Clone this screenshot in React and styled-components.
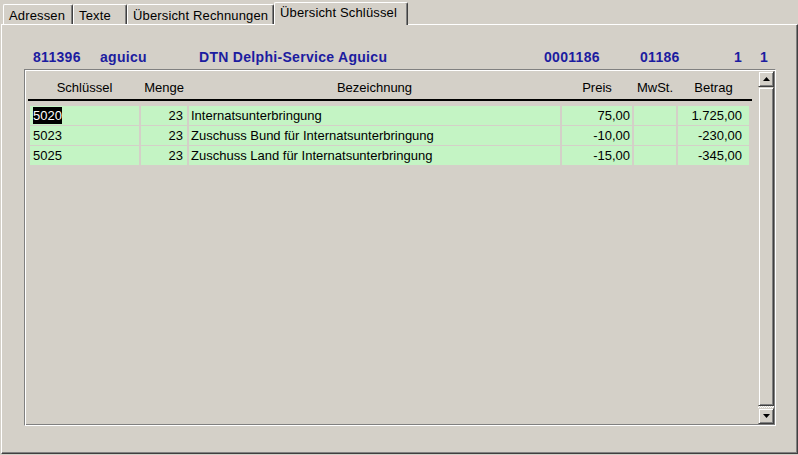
import React from 'react';
import styled, { createGlobalStyle } from 'styled-components';

const GlobalStyle = createGlobalStyle`
    html, body {
        margin: 0;
        padding: 0;
        background: #d4d0c8;
    }
    body {
        font-family: "Liberation Sans", Arial, sans-serif;
        font-size: 13px;
        color: #000;
    }
`

const COLS = '109px 46px 371px 70px 42px 71px';

const Window = styled.div`
    width: 798px;
    height: 455px;
    background: #d4d0c8;
    display: flex;
    flex-direction: column;
    overflow: hidden;
`

const TabBar = styled.div`
    display: flex;
    align-items: flex-end;
    height: 24px;
    padding-left: 3px;
    box-sizing: border-box;
`

const Tab = styled.div`
    position: relative;
    box-sizing: border-box;
    width: ${p => p.$w}px;
    height: ${p => (p.$active ? 23 : 20)}px;
    margin-bottom: ${p => (p.$active ? -1 : 0)}px;
    z-index: ${p => (p.$active ? 2 : 0)};
    padding: ${p => (p.$active ? 1 : 2)}px 0 0 5px;
    line-height: 17px;
    white-space: nowrap;
    letter-spacing: 0.15px;
    background: #d4d0c8;
    border-top: 1px solid #fff;
    border-left: 1px solid #fff;
    border-right: 1px solid #404040;
    border-radius: 2px 2px 0 0;
    box-shadow: inset -1px 0 0 #808080;
`

const Panel = styled.div`
    box-sizing: border-box;
    width: 797px;
    height: 430px;
    margin-left: 1px;
    border-top: 1px solid #fff;
    border-left: 1px solid #fff;
    border-right: 1px solid #404040;
    border-bottom: 1px solid #404040;
    box-shadow: inset -1px -1px 0 #808080;
    display: flex;
    flex-direction: column;
`

const InfoRow = styled.div`
    display: flex;
    align-items: center;
    height: 18px;
    margin-top: 23px;
    margin-bottom: 3px;
    padding-left: 31px;
    font-size: 14px;
    font-weight: bold;
    letter-spacing: 0.3px;
    color: #1c1ca0;
`

const InfoItem = styled.span`
    width: ${p => p.$w}px;
    flex: none;
    white-space: nowrap;
`

const Frame = styled.div`
    box-sizing: border-box;
    width: 752px;
    height: 357px;
    margin-left: 22px;
    border: 1px solid;
    border-color: #808080 #fff #fff #808080;
    box-shadow: inset 1px 1px 0 #fff, inset -1px -1px 0 #808080;
    padding: 1px;
    display: flex;
`

const GridArea = styled.div`
    flex: 1;
    padding-left: 2px;
`

const HeaderRow = styled.div`
    display: grid;
    grid-template-columns: ${COLS};
    column-gap: 2px;
    width: 724px;
    box-sizing: border-box;
    padding: 7px 0 1px 2px;
    border-bottom: 2px solid #000;
`

const HeaderCell = styled.div`
    text-align: center;
    line-height: 20px;
    white-space: nowrap;
`

const Rows = styled.div`
    display: grid;
    grid-template-columns: ${COLS};
    grid-auto-rows: 19px;
    column-gap: 2px;
    row-gap: 1px;
    margin-top: 5px;
    padding-left: 2px;
`

const Cell = styled.div`
    background: #c4f4c4;
    line-height: 19px;
    white-space: nowrap;
    overflow: hidden;
    text-align: ${p => (p.$right ? 'right' : 'left')};
    padding-left: ${p => p.$pl || 0}px;
    padding-right: ${p => p.$pr || 0}px;
`

const Selected = styled.span`
    display: inline-block;
    background: #000;
    color: #fff;
    line-height: 17px;
    vertical-align: top;
    margin-top: 1px;
`

const Scrollbar = styled.div`
    width: 16px;
    flex: none;
    display: flex;
    flex-direction: column;
`

const Raised = styled.div`
    box-sizing: border-box;
    background: #d4d0c8;
    border: 1px solid;
    border-color: #d4d0c8 #404040 #404040 #d4d0c8;
    box-shadow: inset 1px 1px 0 #fff, inset -1px -1px 0 #808080;
`

const ScrollButton = styled(Raised)`
    height: 16px;
    display: flex;
    align-items: center;
    justify-content: center;
`

const Thumb = styled(Raised)`
    flex: 1;
`

const Track = styled.div`
    height: 2px;
    background: repeating-conic-gradient(#fff 0 25%, #d4d0c8 0 50%) 0 0 / 2px 2px;
`

const Arrow = ({ down }) => (
    <svg width="7" height="4" viewBox="0 0 7 4" style={{ transform: down ? 'rotate(180deg)' : 'none' }}>
        <path d="M3.5 0 L7 4 L0 4 Z" fill="#000" />
    </svg>
)

const rows = [
    { key: '5020', menge: '23', text: 'Internatsunterbringung', preis: '75,00', betrag: '1.725,00', sel: true },
    { key: '5023', menge: '23', text: 'Zuschuss Bund für Internatsunterbringung', preis: '-10,00', betrag: '-230,00' },
    { key: '5025', menge: '23', text: 'Zuschuss Land für Internatsunterbringung', preis: '-15,00', betrag: '-345,00' },
];

const App = () => {
    return (
        <Window>
            <GlobalStyle />
            <TabBar>
                <Tab $w={70}>Adressen</Tab>
                <Tab $w={54}>Texte</Tab>
                <Tab $w={147}>Übersicht Rechnungen</Tab>
                <Tab $w={134} $active>Übersicht Schlüssel</Tab>
            </TabBar>
            <Panel>
                <InfoRow>
                    <InfoItem $w={67}>811396</InfoItem>
                    <InfoItem $w={99}>aguicu</InfoItem>
                    <InfoItem $w={345}>DTN Delphi-Service Aguicu</InfoItem>
                    <InfoItem $w={96}>0001186</InfoItem>
                    <InfoItem $w={94}>01186</InfoItem>
                    <InfoItem $w={26}>1</InfoItem>
                    <InfoItem $w={10}>1</InfoItem>
                </InfoRow>
                <Frame>
                    <GridArea>
                        <HeaderRow>
                            <HeaderCell>Schlüssel</HeaderCell>
                            <HeaderCell>Menge</HeaderCell>
                            <HeaderCell>Bezeichnung</HeaderCell>
                            <HeaderCell>Preis</HeaderCell>
                            <HeaderCell>MwSt.</HeaderCell>
                            <HeaderCell>Betrag</HeaderCell>
                        </HeaderRow>
                        <Rows>
                            {rows.map(r => (
                                <React.Fragment key={r.key}>
                                    <Cell $pl={3}>{r.sel ? <Selected>{r.key}</Selected> : r.key}</Cell>
                                    <Cell $right $pr={4}>{r.menge}</Cell>
                                    <Cell $pl={2}>{r.text}</Cell>
                                    <Cell $right $pr={2}>{r.preis}</Cell>
                                    <Cell />
                                    <Cell $right $pr={7}>{r.betrag}</Cell>
                                </React.Fragment>
                            ))}
                        </Rows>
                    </GridArea>
                    <Scrollbar>
                        <ScrollButton><Arrow /></ScrollButton>
                        <Thumb />
                        <Track />
                        <ScrollButton><Arrow down /></ScrollButton>
                    </Scrollbar>
                </Frame>
            </Panel>
        </Window>
    );
}

export default App;
